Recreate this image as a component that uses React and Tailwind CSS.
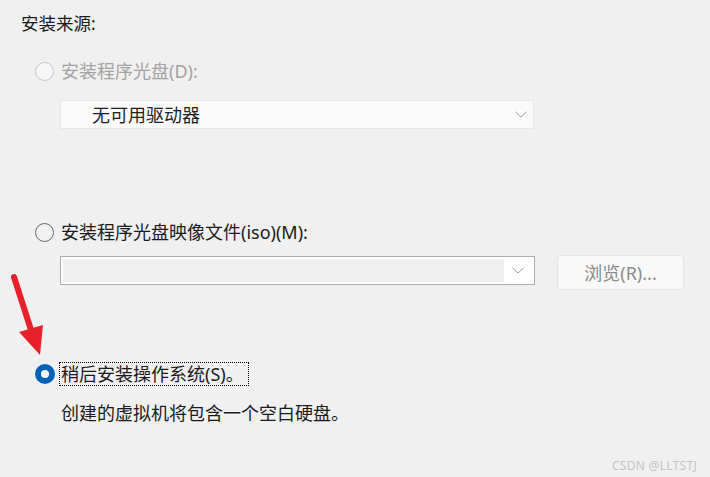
import React from "react";

const Chevron = ({ color = "#a0a0a0" }) => (
  <svg width="12" height="7" viewBox="0 0 12 7" fill="none">
    <path d="M0.5 0.8 L6 6 L11.5 0.8" stroke={color} strokeWidth="1" />
  </svg>
);

export default function App() {
  return (
    <div
      className="relative w-[710px] h-[477px] overflow-hidden bg-[#f0f0f0] text-[18px] text-[#1a1a1a]"
      style={{ fontFamily: "'Noto Sans', 'Noto Sans CJK SC', sans-serif" }}
    >
      <div className="flex flex-col">
        <div className="mt-[11px] ml-[21px] h-[24px] leading-[24px] text-[17.5px]">安装来源:</div>

        <div className="mt-[24px] ml-[35px] flex items-center h-[24px]">
          <div className="w-[19px] h-[19px] rounded-full border border-[#c6c6c6] bg-[#f6f6f6]" />
          <span className="ml-[7px] leading-[24px] text-[#a3a3a3]">安装程序光盘(D):</span>
        </div>

        <div className="mt-[17px] ml-[60px] w-[474px] h-[29px] flex items-center justify-between bg-[#fafafa] border border-[#e6e6e6] pl-[31px] pr-[6px]">
          <span className="leading-[24px] text-[#1f1f1f]">无可用驱动器</span>
          <Chevron />
        </div>

        <div className="mt-[91px] ml-[35px] flex items-center h-[24px]">
          <div className="w-[19px] h-[19px] rounded-full border border-[#6a6a6a] bg-[#f2f2f2]" />
          <span className="ml-[7px] leading-[24px]">安装程序光盘映像文件(iso)(M):</span>
        </div>

        <div className="mt-[12px] ml-[60px] flex items-start">
          <div className="w-[475px] h-[29px] flex border border-[#adadad] bg-white p-[2px]">
            <div className="flex-1 bg-[#f0f0f0]" />
            <div className="w-[28px] flex items-center justify-center">
              <Chevron />
            </div>
          </div>
          <button className="ml-[22px] -mt-[1px] w-[127px] h-[35px] rounded-[4px] border border-[#e5e5e5] bg-[#f8f8f8] text-[#8c8c8c] leading-[24px]">
            浏览(R)...
          </button>
        </div>

        <div className="mt-[72px] ml-[35px] flex items-center h-[24px]">
          <div className="w-[20px] h-[20px] rounded-full bg-[#0061b8] flex items-center justify-center">
            <div className="w-[8px] h-[8px] rounded-full bg-white" />
          </div>
          <span className="ml-[4px] h-[24px] leading-[22px] border border-dotted border-black pl-[1px] pr-[4px]">
            稍后安装操作系统(S)。
          </span>
        </div>

        <div className="mt-[15px] ml-[61px] h-[24px] leading-[24px]">
          创建的虚拟机将包含一个空白硬盘。
        </div>
      </div>

      <svg className="absolute left-0 top-[265px]" width="60" height="100" viewBox="0 265 60 100">
        <line x1="14" y1="277" x2="32" y2="333" stroke="#e8202a" strokeWidth="6" strokeLinecap="round" />
        <polygon points="19,332 43,325 40,355" fill="#e8202a" />
      </svg>

      <div className="absolute right-[13px] top-[458px] text-[12px] leading-[16px] text-[#c4c4c4] tracking-[0.3px]">
        CSDN @LLTSTJ
      </div>
    </div>
  );
}
